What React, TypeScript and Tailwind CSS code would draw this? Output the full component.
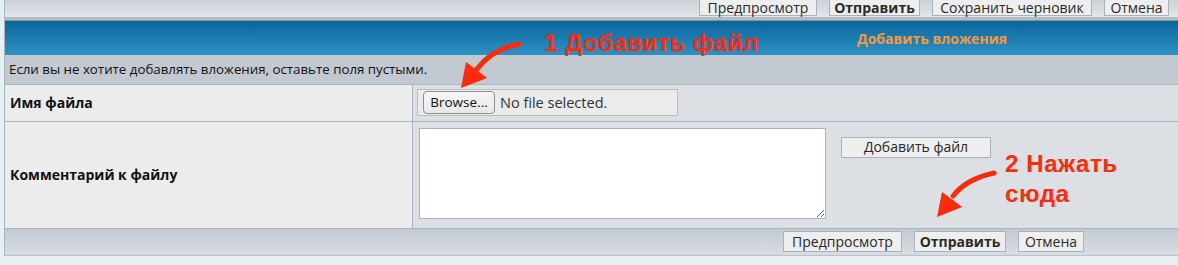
import * as React from 'react';

const ui = "font-['Open_Sans','Noto_Sans',sans-serif]";

// flat grey forum buttons
const Btn = ({ label, w, bold, top }: { label: string; w: string; bold?: boolean; top?: boolean }) => (
    <button
        className={`${w} ${top ? 'h-[16px] border-t-0 pt-[1px] leading-[12px]' : 'h-[21px] leading-none'} shrink-0 border border-[#a7b2bc] bg-[#eeeeee] text-[14px] text-[#2a2a2a] ${bold ? 'font-bold' : ''}`}
    >
        {label}
    </button>
);

const Arrow = ({ d, head }: { d: string; head: string }) => (
    <>
        <path d={d} fill="none" stroke="#ff2a0a" strokeWidth="5" strokeLinecap="round" />
        <polygon points={head} fill="#ff2a0a" />
    </>
);

export default function App() {
    return (
        <div className={`relative w-[1178px] h-[265px] overflow-hidden bg-[#e6f0f3] ${ui}`}>
            <div className="ml-[4px] border-l border-[#a6b5c1]">
                {/* top buttons (cut by the window edge) */}
                <div className="h-[17px] flex items-start justify-end pr-[9px] bg-gradient-to-b from-[#cbd1d8] to-[#e4e7ea]">
                    <div className="flex gap-[12px]">
                        <Btn label="Предпросмотр" w="w-[118px]" top />
                        <Btn label="Отправить" w="w-[91px]" bold top />
                        <Btn label="Сохранить черновик" w="w-[160px]" top />
                        <Btn label="Отмена" w="w-[65px]" top />
                    </div>
                </div>
                <div className="h-[3px] bg-[#b3bbc3]" />
                <div className="h-px bg-[#7f95a5]" />

                {/* header */}
                <div className="h-[34px] flex items-center pl-[852px] bg-gradient-to-b from-[#07679b] to-[#2e91c3]">
                    <span className="text-[14px] font-bold text-[#f7993c]">Добавить вложения</span>
                </div>

                <div className="h-[29px] flex items-center pl-[4px] bg-[#c2c9d0] text-[13.3px] text-[#111]">
                    Если вы не хотите добавлять вложения, оставьте поля пустыми.
                </div>
                <div className="h-px bg-[#a9b6c2]" />

                {/* file row */}
                <div className="h-[36px] grid grid-cols-[407px_1px_1fr]">
                    <div className="flex items-center pl-[5px] pb-[2px] bg-[#ececec] text-[14px] font-bold text-[#111]">
                        Имя файла
                    </div>
                    <div className="bg-[#a9b6c2]" />
                    <div className="bg-[#dce0e5] pl-[4px] pt-[4px]">
                        <div className="w-[261px] h-[27px] flex items-center gap-[5px] pl-[5px] border border-[#b7bec4] bg-[#ebebeb]">
                            <button className="w-[72px] h-[23px] rounded-[4px] border border-[#8f8f8f] bg-gradient-to-b from-[#f7f7f7] to-[#e8e8e8] text-[13.5px] text-[#111]">
                                Browse...
                            </button>
                            <span className="text-[14.5px] text-[#333]">No file selected.</span>
                        </div>
                    </div>
                </div>
                <div className="h-px bg-[#a9b6c2]" />

                {/* comment row */}
                <div className="h-[106px] grid grid-cols-[407px_1px_1fr]">
                    <div className="flex items-center pl-[5px] pb-[2px] bg-[#ececec] text-[14px] font-bold text-[#111]">
                        Комментарий к файлу
                    </div>
                    <div className="bg-[#a9b6c2]" />
                    <div className="bg-[#dce0e5] flex items-start gap-[15px] pl-[6px] pt-[6px]">
                        <textarea className="w-[407px] h-[91px] bg-white border border-[#a9b4bd] outline-none" />
                        <div className="pt-[6px]">
                            <Btn label="Добавить файл" w="w-[150px]" />
                        </div>
                    </div>
                </div>
                <div className="h-px bg-[#a9b6c2]" />

                {/* footer */}
                <div className="h-[25px] flex items-center gap-[12px] pl-[778px] bg-gradient-to-b from-[#c2c9d1] to-[#dadee3]">
                    <Btn label="Предпросмотр" w="w-[119px]" />
                    <Btn label="Отправить" w="w-[92px]" bold />
                    <Btn label="Отмена" w="w-[66px]" />
                </div>
                <div className="h-[2px] bg-[#d3d9de] border-b border-[#b9c4cc]" />
            </div>

            {/* annotations */}
            <svg className="absolute inset-0 pointer-events-none" width="1178" height="265">
                <Arrow d="M519,44 Q492,49 477,69" head="461,88 466,62 487,78" />
                <Arrow d="M994,173 Q966,179 953,196" head="937,217 942,192 962,207" />
            </svg>
            <div className="absolute left-[544px] top-[29px] font-['Liberation_Sans',Arial,sans-serif] text-[24px] font-bold leading-[28px] tracking-[0.5px] text-[#ff2a0a]">
                1 Добавить файл
            </div>
            <div className="absolute left-[1005px] top-[149px] font-['Liberation_Sans',Arial,sans-serif] text-[24px] font-bold leading-[30px] tracking-[0.6px] text-[#ff2a0a]">
                2 Нажать
                <br />
                сюда
            </div>
        </div>
    );
}
